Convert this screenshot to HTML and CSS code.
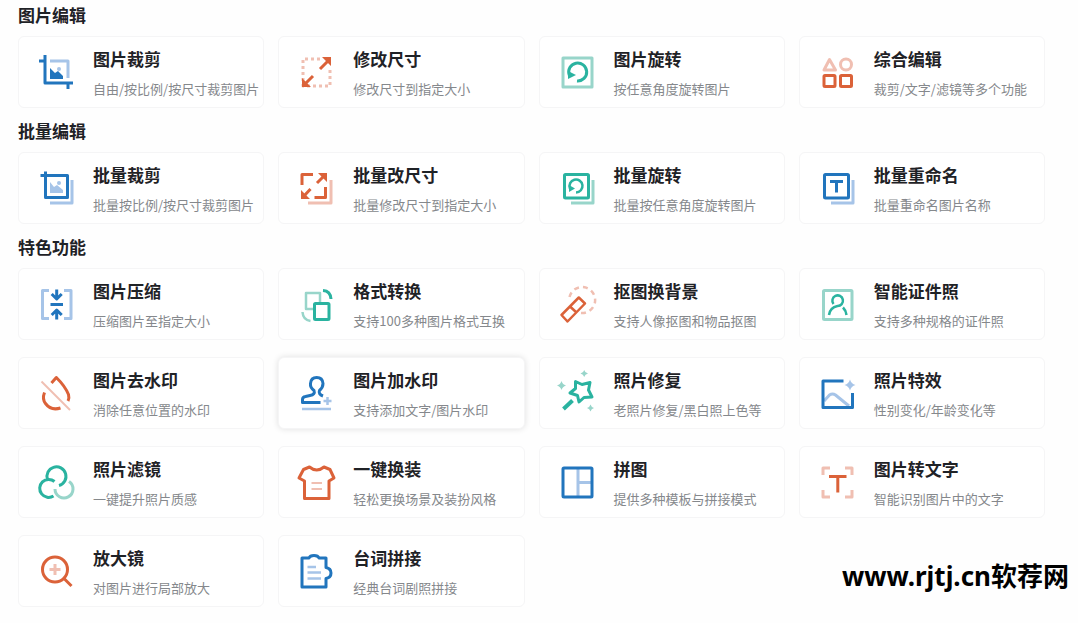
FILE: index.html
```
<!DOCTYPE html>
<html lang="zh-CN">
<head>
    <meta charset="UTF-8">
    <meta name="viewport" content="width=device-width, initial-scale=1.0">
    <title>图片编辑</title>
    <link rel="stylesheet" href="styles.css">
</head>
<body>
    <main>
        <section>
            <h2>图片编辑</h2>
            <div class="grid">
                <a class="card" href="#">
                    <svg class="icon blue" viewBox="0 0 40 40">
                        <path class="soft" d="M14 9H32V26"/>
                        <path d="M3 9H9M9 3V31H37M32 31V37"/>
                        <path class="fill" d="M14 16L19 21L22 19L27 24V27H14Z"/>
                        <circle class="soft-fill" cx="23" cy="17" r="2"/>
                    </svg>
                    <div class="text">
                        <h3>图片裁剪</h3>
                        <p>自由/按比例/按尺寸裁剪图片</p>
                    </div>
                </a>
                <a class="card" href="#">
                    <svg class="icon orange" viewBox="0 0 40 40">
                        <path class="soft" stroke-dasharray="3 3" d="M24 7H7V34H34V15"/>
                        <path d="M24 17L33 8M17 24L8 33"/>
                        <path class="fill" d="M26 5H35V14ZM6 26V35H15Z"/>
                    </svg>
                    <div class="text">
                        <h3>修改尺寸</h3>
                        <p>修改尺寸到指定大小</p>
                    </div>
                </a>
                <a class="card" href="#">
                    <svg class="icon teal" viewBox="0 0 40 40">
                        <rect class="soft" x="6" y="6" width="29" height="29"/>
                        <path d="M12.2 23A9 9 0 1 1 20 29"/>
                        <path class="fill" d="M11 19L11 27L19 23Z"/>
                    </svg>
                    <div class="text">
                        <h3>图片旋转</h3>
                        <p>按任意角度旋转图片</p>
                    </div>
                </a>
                <a class="card" href="#">
                    <svg class="icon orange" viewBox="0 0 40 40">
                        <path class="soft" d="M12.5 7.5L7 18H18.5Z"/>
                        <circle class="soft" cx="29" cy="12.5" r="5.5"/>
                        <rect x="7" y="23.5" width="11" height="11" rx="1"/>
                        <rect x="23.5" y="23.5" width="11" height="11" rx="1"/>
                    </svg>
                    <div class="text">
                        <h3>综合编辑</h3>
                        <p>裁剪/文字/滤镜等多个功能</p>
                    </div>
                </a>
            </div>
        </section>

        <section>
            <h2>批量编辑</h2>
            <div class="grid">
                <a class="card" href="#">
                    <svg class="icon blue" viewBox="0 0 40 40">
                        <path class="soft" d="M36 12V35H14"/>
                        <path d="M4.5 7.5H31.5V29.5H9.5V3.5"/>
                        <path class="soft-fill" d="M14 14L18 19L21 17L27 22V25H14Z"/>
                        <circle class="soft-fill" cx="23" cy="15" r="2"/>
                    </svg>
                    <div class="text">
                        <h3>批量裁剪</h3>
                        <p>批量按比例/按尺寸裁剪图片</p>
                    </div>
                </a>
                <a class="card" href="#">
                    <svg class="icon orange" viewBox="0 0 40 40">
                        <path class="soft" d="M35 12V35H12"/>
                        <path d="M17 6.5H6V17M29.5 19V29.5H18.5M21 15L28 8M14.5 21L8 28"/>
                        <path class="fill" d="M22 5H31V14ZM5 22V31H14Z"/>
                    </svg>
                    <div class="text">
                        <h3>批量改尺寸</h3>
                        <p>批量修改尺寸到指定大小</p>
                    </div>
                </a>
                <a class="card" href="#">
                    <svg class="icon teal" viewBox="0 0 40 40">
                        <path class="soft" d="M36 12V35H14"/>
                        <rect x="7.5" y="6.5" width="24" height="23.5" rx="1"/>
                        <path class="mid" d="M13 20.5A6.5 6.5 0 1 1 19 24.5"/>
                        <path class="fill" d="M12 17L12 24L18 20.5Z"/>
                    </svg>
                    <div class="text">
                        <h3>批量旋转</h3>
                        <p>批量按任意角度旋转图片</p>
                    </div>
                </a>
                <a class="card" href="#">
                    <svg class="icon blue" viewBox="0 0 40 40">
                        <path class="soft" d="M36 12V35H14"/>
                        <rect x="7.5" y="6.5" width="24" height="23.5" rx="1"/>
                        <path d="M13 13.5H26M19.5 13.5V24.5"/>
                    </svg>
                    <div class="text">
                        <h3>批量重命名</h3>
                        <p>批量重命名图片名称</p>
                    </div>
                </a>
            </div>
        </section>

        <section>
            <h2>特色功能</h2>
            <div class="grid">
                <a class="card" href="#">
                    <svg class="icon blue" viewBox="0 0 40 40">
                        <path class="soft" d="M13 6.5H6.5V34.5H13M28 6.5H35V34.5H28"/>
                        <path d="M14.5 20.5H27M20.7 5.5V15M15.7 10L20.7 15L25.7 10M20.7 35.5V27M15.7 31L20.7 26L25.7 31"/>
                    </svg>
                    <div class="text">
                        <h3>图片压缩</h3>
                        <p>压缩图片至指定大小</p>
                    </div>
                </a>
                <a class="card" href="#">
                    <svg class="icon teal" viewBox="0 0 40 40">
                        <path class="soft mid" d="M17 25H10V9H24V18M6.5 28Q7 36 14.5 37"/>
                        <rect x="18.5" y="19.5" width="14.5" height="16" rx="1"/>
                        <path d="M27 6.500Q34.5 7 35 15"/>
                    </svg>
                    <div class="text">
                        <h3>格式转换</h3>
                        <p>支持100多种图片格式互换</p>
                    </div>
                </a>
                <a class="card" href="#">
                    <svg class="icon orange" viewBox="0 0 40 40">
                        <path class="soft mid" stroke-dasharray="5 4" d="M12.5 13A13 13 0 1 1 24 29"/>
                        <path class="mid" d="M21.8 13.5L28 19.5L10.5 37.5L4.5 31ZM13 22.5L19.5 28.5"/>
                    </svg>
                    <div class="text">
                        <h3>抠图换背景</h3>
                        <p>支持人像抠图和物品抠图</p>
                    </div>
                </a>
                <a class="card" href="#">
                    <svg class="icon teal" viewBox="0 0 40 40">
                        <rect class="soft" x="6.5" y="6.5" width="28.5" height="29" rx="1"/>
                        <path class="mid" d="M16.5 20A5.3 5.3 0 1 1 20.5 22Q13 23.500 12 31M26 23.5Q29 26.5 29.5 31"/>
                    </svg>
                    <div class="text">
                        <h3>智能证件照</h3>
                        <p>支持多种规格的证件照</p>
                    </div>
                </a>
                <a class="card" href="#">
                    <svg class="icon orange" viewBox="0 0 40 40">
                        <path class="soft thin" d="M5.5 8.5L34 37"/>
                        <path d="M15.5 10L20.3 4.500Q29 13 32.5 21.500Q33.5 25 32 28M8.5 19.500Q6 26 9.5 30.500Q15 38 24.5 35"/>
                    </svg>
                    <div class="text">
                        <h3>图片去水印</h3>
                        <p>消除任意位置的水印</p>
                    </div>
                </a>
                <a class="card active" href="#">
                    <svg class="icon blue" viewBox="0 0 40 40">
                        <path class="soft mid" d="M6 36H35M31.5 24V32M27.5 28H35.5"/>
                        <path d="M24.5 29.500H6.5V26.500Q6.5 24 9.5 23.500L14 22.500Q19.5 21.500 18 17.500Q14 14.500 14.5 10.500Q15 4.500 20.7 4.500Q26.5 4.500 27 10.500Q27 14.500 23.5 17.500Q22 21 27 23"/>
                    </svg>
                    <div class="text">
                        <h3>图片加水印</h3>
                        <p>支持添加文字/图片水印</p>
                    </div>
                </a>
                <a class="card" href="#">
                    <svg class="icon teal" viewBox="0 0 40 40">
                        <path class="soft-fill" d="M4.5 8Q5.5 11.500 9 12.500Q5.5 13.500 4.500 17Q3.500 13.500 0 12.500Q3.500 11.500 4.500 8ZM27.200 -3Q28 0 31 .5Q28 1 27.200 4Q26.400 1 23.500 .5Q26.400 0 27.200 -3ZM33.500 31.500Q34.300 34.200 37 35Q34.300 35.800 33.500 38.500Q32.700 35.800 30 35Q32.700 34.200 33.500 31.500Z"/>
                        <path d="M18.5 8.500L25 11.500L33 9.500L31.500 17L35 24L27 24.500L22 29L20.500 22.500L13 20L18.500 15.500Z"/>
                        <path class="thick" d="M15.5 27.5L6.5 36"/>
                    </svg>
                    <div class="text">
                        <h3>照片修复</h3>
                        <p>老照片修复/黑白照上色等</p>
                    </div>
                </a>
                <a class="card" href="#">
                    <svg class="icon blue" viewBox="0 0 40 40">
                        <path class="soft" d="M7 28L12.5 22Q15.5 20 18.5 22L32 33"/>
                        <path class="soft-fill" d="M33 6.500Q34.200 10.800 38.500 12Q34.200 13.200 33 17.500Q31.800 13.200 27.500 12Q31.800 10.800 33 6.500Z"/>
                        <path d="M26.5 8H6V34.5H35.5V20"/>
                    </svg>
                    <div class="text">
                        <h3>照片特效</h3>
                        <p>性别变化/年龄变化等</p>
                    </div>
                </a>
                <a class="card" href="#">
                    <svg class="icon teal" viewBox="0 0 40 40">
                        <path class="soft" d="M33 19.5A9 9 0 1 1 19 27"/>
                        <path d="M11.5 17.5A9.5 9.5 0 1 1 23 23.5M18.5 19.5A9 9 0 1 0 17.5 34"/>
                    </svg>
                    <div class="text">
                        <h3>照片滤镜</h3>
                        <p>一键提升照片质感</p>
                    </div>
                </a>
                <a class="card" href="#">
                    <svg class="icon orange" viewBox="0 0 40 40">
                        <path class="soft thin" d="M15.5 21H26M15.5 27H26"/>
                        <path d="M13.5 5Q20.7 11 28 5L34 7.5L38 16L33 19V36.5H8.5V19L3 16L7.5 7.5Z"/>
                    </svg>
                    <div class="text">
                        <h3>一键换装</h3>
                        <p>轻松更换场景及装扮风格</p>
                    </div>
                </a>
                <a class="card" href="#">
                    <svg class="icon blue" viewBox="0 0 40 40">
                        <path class="soft" d="M21 6V35M21 20.5H35"/>
                        <rect x="6" y="6" width="29" height="29" rx="1"/>
                    </svg>
                    <div class="text">
                        <h3>拼图</h3>
                        <p>提供多种模板与拼接模式</p>
                    </div>
                </a>
                <a class="card" href="#">
                    <svg class="icon orange" viewBox="0 0 40 40">
                        <path class="soft" d="M6 13V6H13M28 6H35V13M35 28V35H28M13 35H6V28"/>
                        <path d="M12 14.5H29.5M20.8 14.5V30.5"/>
                    </svg>
                    <div class="text">
                        <h3>图片转文字</h3>
                        <p>智能识别图片中的文字</p>
                    </div>
                </a>
                <a class="card" href="#">
                    <svg class="icon orange" viewBox="0 0 40 40">
                        <path class="soft" d="M19 13V24M13.5 18.5H24.5"/>
                        <circle cx="19" cy="18.5" r="12.5"/>
                        <path d="M28 27.5L35.5 35"/>
                    </svg>
                    <div class="text">
                        <h3>放大镜</h3>
                        <p>对图片进行局部放大</p>
                    </div>
                </a>
                <a class="card" href="#">
                    <svg class="icon blue" viewBox="0 0 40 40">
                        <path class="soft mid" d="M11.5 16H20M11.5 21.5H25M11.5 27.5H25"/>
                        <path d="M6 7H13Q14 4.5 18 4.5Q22 4.5 23 7H30V16.500Q35 17.500 35 22Q35 26.500 30 27.500V36H6Z"/>
                    </svg>
                    <div class="text">
                        <h3>台词拼接</h3>
                        <p>经典台词剧照拼接</p>
                    </div>
                </a>
            </div>
        </section>
    </main>
    <div class="watermark">www.rjtj.cn软荐网</div>
</body>
</html>
```

FILE: styles.css
```
* {
    box-sizing: border-box;
}

body {
    margin: 0;
    background-color: #fefefe;
    font-family: "Noto Sans CJK SC", sans-serif;
    color: #1f2226;
}

main {
    padding: 0 33px 8px 18px;
}

h2, h3, p {
    margin: 0;
    line-height: 30px;
    white-space: nowrap;
}

h2 {
    font-size: 17px;
    font-weight: bold;
    margin-bottom: 6px;
}

section {
    margin-bottom: 8px;
}

.grid {
    display: grid;
    grid-template-columns: repeat(4, 1fr);
    gap: 17px 14px;
}

.card {
    display: flex;
    align-items: center;
    gap: 17px;
    height: 72px;
    padding-left: 17px;
    background-color: #fff;
    border: 1px solid #f5f5f6;
    border-radius: 6px;
    color: inherit;
    text-decoration: none;
}

.card:hover,
.card.active {
    box-shadow: 0 0 6px rgba(0, 0, 0, 0.12);
}

.text {
    padding-top: 3px;
}

h3 {
    font-size: 17px;
    font-weight: bold;
}

p {
    font-size: 13px;
    color: #85888c;
}

/* icons */
.icon {
    width: 40px;
    height: 40px;
    flex-shrink: 0;
    overflow: visible;
    fill: none;
    stroke: var(--main);
    stroke-width: 3;
    stroke-linejoin: round;
}

.blue {
    --main: #2175bd;
    --soft: #a6c4e8;
}

.orange {
    --main: #db6239;
    --soft: #f0bfb2;
}

.teal {
    --main: #2ab3a0;
    --soft: #98d5ca;
}

.icon .soft {
    stroke: var(--soft);
}

.icon .thin {
    stroke-width: 2;
}

.icon .mid {
    stroke-width: 2.5;
}

.icon .thick {
    stroke-width: 4;
}

.icon .fill {
    fill: var(--main);
    stroke: none;
}

.icon .soft-fill {
    fill: var(--soft);
    stroke: none;
}

.watermark {
    position: absolute;
    right: 9px;
    top: 556px;
    font-family: "Noto Sans", "Noto Sans CJK SC", sans-serif;
    font-size: 26px;
    font-weight: bold;
    line-height: 40px;
    color: #000;
}
```
